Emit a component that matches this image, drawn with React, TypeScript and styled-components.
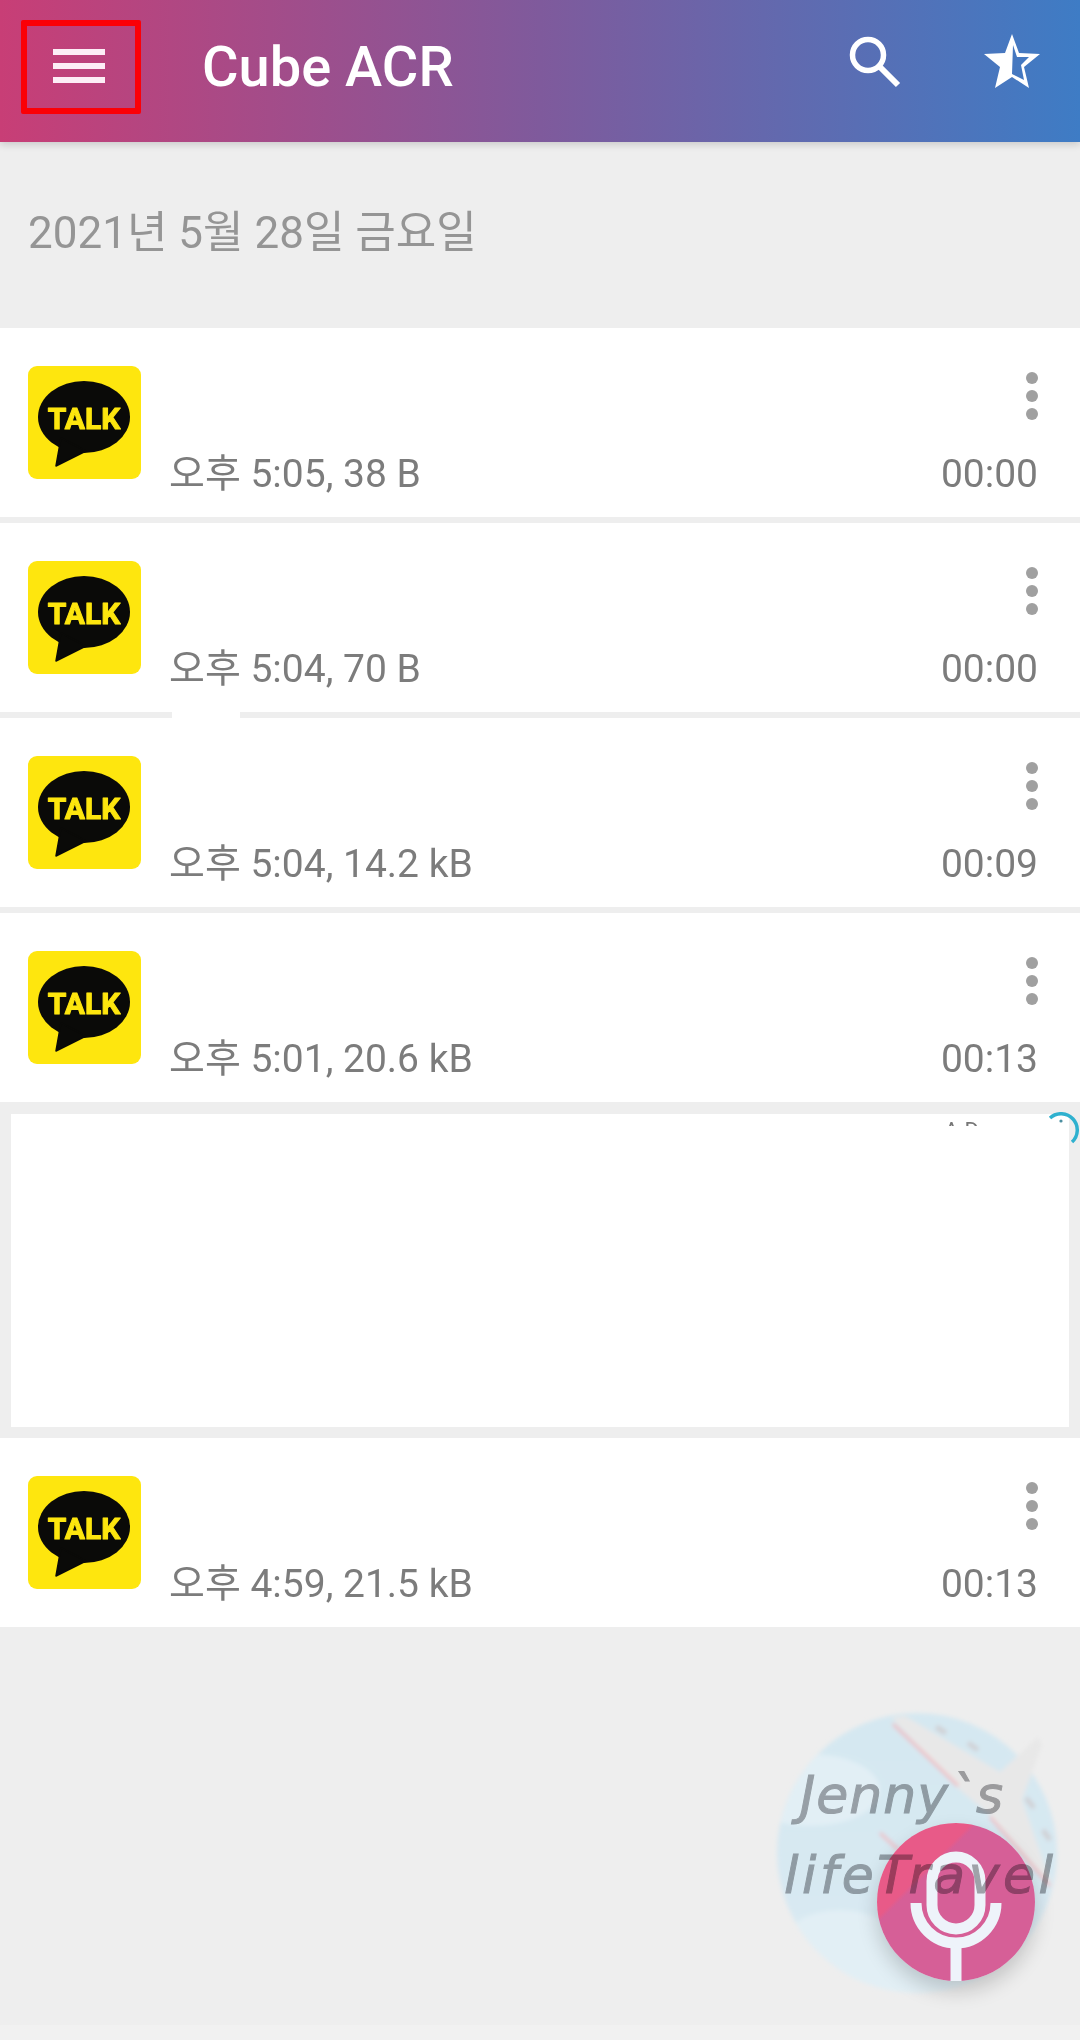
import React from "react";
import styled, { createGlobalStyle } from "styled-components";

const Global = createGlobalStyle`
  html, body { margin: 0; padding: 0; background: #eeeeee; }
  body { font-family: Roboto, "Noto Sans CJK KR", sans-serif; }
`;

const Page = styled.div`
  position: relative;
  width: 1080px;
  height: 2040px;
  overflow: hidden;
  background: #eeeeee;
  display: flex;
  flex-direction: column;
`;

const Toolbar = styled.header`
  position: relative;
  z-index: 2;
  flex: none;
  height: 142px;
  display: flex;
  align-items: center;
  padding-bottom: 8px;
  box-sizing: border-box;
  background: linear-gradient(90deg, #c83e76 0%, #7f5a9c 50%, #3e7cc5 100%);
  box-shadow: 0 3px 7px rgba(0, 0, 0, 0.14);
`;

const MenuButton = styled.div`
  flex: none;
  width: 120px;
  height: 94px;
  margin-left: 21px;
  padding: 0 4px 3px 0;
  box-sizing: border-box;
  border: 6px solid #fb0007;
  border-radius: 2px;
  display: flex;
  flex-direction: column;
  justify-content: center;
  align-items: center;
  gap: 8px;
`;

const MenuBar = styled.span`
  display: block;
  width: 52px;
  height: 6px;
  background: #fdeef6;
`;

const Title = styled.h1`
  flex: 1;
  margin: 0 0 0 61px;
  font: 500 56px Roboto, sans-serif;
  color: #ffffff;
`;

const ToolIcon = styled.svg<{ $right: number }>`
  flex: none;
  display: block;
  margin: 0 ${(p) => p.$right}px 10px 0;
`;

const DateHeading = styled.div`
  flex: none;
  height: 186px;
  box-sizing: border-box;
  padding: 65px 0 0 28px;
  font-size: 44px;
  line-height: 52px;
  color: #959595;
`;

const List = styled.div`
  flex: none;
  display: flex;
  flex-direction: column;
  gap: 6px;
`;

const RowCard = styled.div`
  position: relative;
  height: 189px;
  background: #ffffff;
  display: flex;
  padding: 38px 42px 0 28px;
  box-sizing: border-box;
`;

const Notch = styled.span`
  position: absolute;
  left: 172px;
  top: -6px;
  width: 68px;
  height: 6px;
  background: #ffffff;
`;

const AppIcon = styled.svg`
  flex: none;
  display: block;
`;

const Meta = styled.div`
  flex: 1;
  margin: 85px 0 0 28px;
  font-size: 39px;
  line-height: 46px;
  color: #7c7c7c;
`;

const RowSide = styled.div`
  flex: none;
  display: flex;
  flex-direction: column;
  align-items: flex-end;
`;

const Dots = styled.div`
  display: flex;
  flex-direction: column;
  gap: 6px;
  margin: 6px 0 0 0;
  height: 79px;
`;

const Dot = styled.span`
  display: block;
  width: 12px;
  height: 12px;
  border-radius: 50%;
  background: #a0a0a0;
`;

const Duration = styled.div`
  font-size: 39px;
  line-height: 46px;
  color: #7c7c7c;
`;

const AdSlot = styled.div`
  position: relative;
  height: 313px;
  margin: 6px 11px 5px;
  background: #ffffff;
`;

const AdLabel = styled.span`
  position: absolute;
  right: 84px;
  top: 6px;
  height: 6px;
  overflow: hidden;
  font-size: 22px;
  line-height: 22px;
  letter-spacing: 6px;
  color: #777777;
`;

const AdChoice = styled.svg`
  position: absolute;
  right: -11px;
  top: -2px;
`;

const WatermarkArt = styled.svg`
  position: absolute;
  left: 760px;
  top: 1700px;
`;

const WatermarkText = styled.span<{ $left: number; $top: number; $spacing: number }>`
  position: absolute;
  left: ${(p) => p.$left}px;
  top: ${(p) => p.$top}px;
  font: italic 400 52px "DejaVu Sans", sans-serif;
  letter-spacing: ${(p) => p.$spacing}px;
  -webkit-text-stroke: 1px #aaaaad;
  color: #aaaaad;
  white-space: nowrap;
  filter: blur(0.7px);
  mix-blend-mode: multiply;
  z-index: 4;
`;

const Fab = styled.div`
  position: absolute;
  left: 877px;
  top: 1823px;
  width: 158px;
  height: 158px;
  border-radius: 50%;
  background: linear-gradient(135deg, #e85a88 0%, #e85a88 30%, #d65f97 32%, #d65f97 100%);
  box-shadow: 0 10px 20px rgba(0, 0, 0, 0.18);
  z-index: 3;
`;

const NavStrip = styled.div`
  position: absolute;
  left: 0;
  right: 0;
  bottom: 0;
  height: 15px;
  background: #f1f1f1;
`;

const rows = [
  { meta: "오후 5:05, 38 B", time: "00:00" },
  { meta: "오후 5:04, 70 B", time: "00:00" },
  { meta: "오후 5:04, 14.2 kB", time: "00:09", notch: true },
  { meta: "오후 5:01, 20.6 kB", time: "00:13" },
];

function KakaoIcon() {
  return (
    <AppIcon width="113" height="113" viewBox="0 0 113 113">
      <rect width="113" height="113" rx="9" fill="#fee60e" />
      <ellipse cx="56" cy="51" rx="46" ry="36" fill="#0a0a08" />
      <path d="M33 72 L28 100 L58 85 Z" fill="#0a0a08" stroke="#0a0a08" strokeWidth="1.5" strokeLinejoin="round" />
      <text
        x="56"
        y="63"
        textAnchor="middle"
        fontFamily="Roboto, sans-serif"
        fontWeight="700"
        fontSize="30"
        fill="#fee60e"
        stroke="#fee60e"
        strokeWidth="1"
        strokeLinejoin="round"
      >
        TALK
      </text>
    </AppIcon>
  );
}

function Row({ meta, time, notch }: { meta: string; time: string; notch?: boolean }) {
  return (
    <RowCard>
      {notch && <Notch />}
      <KakaoIcon />
      <Meta>{meta}</Meta>
      <RowSide>
        <Dots>
          <Dot />
          <Dot />
          <Dot />
        </Dots>
        <Duration>{time}</Duration>
      </RowSide>
    </RowCard>
  );
}

export default function App() {
  return (
    <Page>
      <Global />
      <Toolbar>
        <MenuButton>
          <MenuBar />
          <MenuBar />
          <MenuBar />
        </MenuButton>
        <Title>Cube ACR</Title>
        <ToolIcon $right={82} width="52" height="52" viewBox="0 0 52 52">
          <circle cx="19" cy="19" r="15.5" fill="none" stroke="#fff" strokeWidth="5.5" />
          <path d="M30 30 L49 49" stroke="#fff" strokeWidth="6" />
        </ToolIcon>
        <ToolIcon $right={39} width="58" height="56" viewBox="0 0 58 56">
          <path
            fillRule="evenodd"
            fill="#fff"
            d="M29 0 L36 19 L57 20 L41 33 L46 54 L29 43 L12 54 L17 33 L1 20 L22 19 Z M30 11 L34 23 L46 23 L38 31 L41 46 L29 40 Z"
          />
        </ToolIcon>
      </Toolbar>

      <DateHeading>2021년 5월 28일 금요일</DateHeading>

      <List>
        {rows.map((r) => (
          <Row key={r.meta} {...r} />
        ))}
        <AdSlot>
          <AdLabel>AD</AdLabel>
          <AdChoice width="36" height="36" viewBox="0 0 36 36">
            <path d="M6 6 A15 15 0 0 1 28 30" fill="none" stroke="#2fb1cf" strokeWidth="3.5" />
            <circle cx="17" cy="9" r="1.6" fill="#4b8ea0" />
          </AdChoice>
        </AdSlot>
        <Row meta="오후 4:59, 21.5 kB" time="00:13" />
      </List>

      <NavStrip />
      <WatermarkArt width="320" height="320" viewBox="760 1700 320 320">
        <defs>
          <filter id="soft">
            <feGaussianBlur stdDeviation="2" />
          </filter>
          <clipPath id="disc">
            <circle cx="917" cy="1853" r="140" />
          </clipPath>
          <linearGradient id="sky" x1="0" y1="0" x2="0" y2="1">
            <stop offset="0" stopColor="#d5e8f1" />
            <stop offset="0.7" stopColor="#d8e9f2" />
            <stop offset="1" stopColor="#e4eff4" />
          </linearGradient>
        </defs>
        <g filter="url(#soft)">
          <circle cx="917" cy="1853" r="140" fill="url(#sky)" />
          <g clipPath="url(#disc)" fill="#e2eff5">
            <ellipse cx="810" cy="1790" rx="70" ry="36" />
            <ellipse cx="840" cy="1950" rx="60" ry="40" />
            <ellipse cx="900" cy="1990" rx="70" ry="30" />
          </g>
          <path
            d="M892 1718 L905 1716 L1000 1772 L1038 1737 L1042 1745 L1022 1800 L1052 1886 L990 1815 L960 1790 Z"
            fill="#e8e8e8"
          />
          <g fill="none" strokeWidth="5" stroke="#d0d0d4">
            <path d="M936 1727 L946 1733 M968 1743 L978 1750 M1026 1798 L1034 1808 M1043 1830 L1050 1840" />
          </g>
          <g fill="none" strokeWidth="2.5" stroke="#f2b4ba">
            <path d="M893 1724 L958 1786 M880 1833 L945 1892 M990 1817 L1050 1886" />
          </g>
        </g>
      </WatermarkArt>
      <WatermarkText $left={800} $top={1765} $spacing={1}>Jenny`s</WatermarkText>
      <WatermarkText $left={784} $top={1845} $spacing={3.5}>lifeTravel</WatermarkText>
      <Fab>
        <svg width="158" height="158" viewBox="0 0 158 158">
          <rect x="55" y="34" width="48" height="72" rx="24" fill="none" stroke="#eef3fa" strokeWidth="11" />
          <path d="M39 80 A40 40 0 0 0 119 80" fill="none" stroke="#eef3fa" strokeWidth="11" />
          <path d="M79 120 L79 158" stroke="#eef3fa" strokeWidth="11" />
        </svg>
      </Fab>
    </Page>
  );
}
